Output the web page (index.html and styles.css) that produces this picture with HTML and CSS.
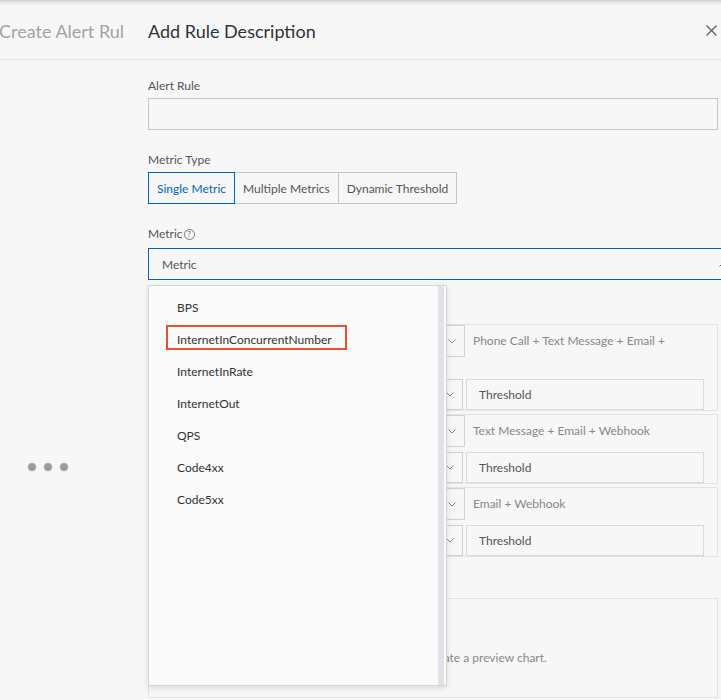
FILE: index.html
```html
<!DOCTYPE html>
<html lang="en">
<head>
<meta charset="utf-8">
<title>Create Alert Rule</title>
<link rel="stylesheet" href="styles.css">
</head>
<body>
<div class="app">
  <aside class="side">
    <div class="side-head"><span class="side-title">Create Alert Rule</span></div>
    <div class="side-body">
      <div class="loader"><i></i><i></i><i></i></div>
    </div>
  </aside>

  <section class="drawer">
    <header class="drawer-head">
      <h1 class="drawer-title">Add Rule Description</h1>
      <button class="close" type="button" aria-label="Close">
        <svg width="11" height="11" viewBox="0 0 11 11"><path d="M0.5 0.5L10.5 10.5M10.5 0.5L0.5 10.5" stroke="#555" stroke-width="1.1" fill="none"/></svg>
      </button>
    </header>

    <div class="drawer-body">
      <div class="field">
        <div class="field-label">Alert Rule</div>
        <div class="input"></div>
      </div>

      <div class="field">
        <div class="field-label">Metric Type</div>
        <div class="segmented">
          <button class="seg seg--active" type="button">Single Metric</button>
          <button class="seg" type="button">Multiple Metrics</button>
          <button class="seg" type="button">Dynamic Threshold</button>
        </div>
      </div>

      <div class="field field--metric">
        <div class="field-label field-label--help">Metric<span class="help">?</span></div>
        <div class="select select--open">
          <span>Metric</span>
          <svg width="8" height="5" viewBox="0 0 8 5"><path d="M0.5 4.5L4 1L7.5 4.5" fill="none" stroke="#666" stroke-width="1"/></svg>
        </div>
        <div class="dropdown">
          <ul class="dropdown-list">
            <li>BPS</li>
            <li class="is-marked">InternetInConcurrentNumber</li>
            <li>InternetInRate</li>
            <li>InternetOut</li>
            <li>QPS</li>
            <li>Code4xx</li>
            <li>Code5xx</li>
          </ul>
          <div class="dropdown-rail"></div>
        </div>
      </div>

      <div class="levels">
        <div class="level level--tall">
          <div class="level-top">
            <div class="mini-select"><svg width="8" height="5" viewBox="0 0 8 5"><path d="M0.5 0.5L4 4L7.5 0.5" fill="none" stroke="#888"/></svg></div>
            <div class="level-channels">Phone Call + Text Message + Email +</div>
          </div>
          <div class="level-bottom">
            <div class="mini-select"><svg width="8" height="5" viewBox="0 0 8 5"><path d="M0.5 0.5L4 4L7.5 0.5" fill="none" stroke="#888"/></svg></div>
            <div class="threshold">Threshold</div>
          </div>
        </div>
        <div class="level">
          <div class="level-top">
            <div class="mini-select"><svg width="8" height="5" viewBox="0 0 8 5"><path d="M0.5 0.5L4 4L7.5 0.5" fill="none" stroke="#888"/></svg></div>
            <div class="level-channels">Text Message + Email + Webhook</div>
          </div>
          <div class="level-bottom">
            <div class="mini-select"><svg width="8" height="5" viewBox="0 0 8 5"><path d="M0.5 0.5L4 4L7.5 0.5" fill="none" stroke="#888"/></svg></div>
            <div class="threshold">Threshold</div>
          </div>
        </div>
        <div class="level">
          <div class="level-top">
            <div class="mini-select"><svg width="8" height="5" viewBox="0 0 8 5"><path d="M0.5 0.5L4 4L7.5 0.5" fill="none" stroke="#888"/></svg></div>
            <div class="level-channels">Email + Webhook</div>
          </div>
          <div class="level-bottom">
            <div class="mini-select"><svg width="8" height="5" viewBox="0 0 8 5"><path d="M0.5 0.5L4 4L7.5 0.5" fill="none" stroke="#888"/></svg></div>
            <div class="threshold">Threshold</div>
          </div>
        </div>
      </div>

      <div class="preview">Select a metric to generate a preview chart.</div>
    </div>
  </section>
</div>
</body>
</html>
```
FILE: styles.css
```css
html, body {
  margin: 0;
  height: 700px;
  overflow: hidden;
}

body {
  background: #f7f7f7;
  font-family: Lato, "Liberation Sans", sans-serif;
  font-size: 12px;
  color: #333;
}

.app {
  display: flex;
  height: 700px;
  background: linear-gradient(#cbcbcb, #e6e6e6 2px, #f7f7f7 6px) no-repeat;
}

/* page behind the drawer */
.side {
  width: 124px;
  flex: none;
  overflow: hidden;
  display: flex;
  flex-direction: column;
}

.side-head {
  height: 60px;
  box-sizing: border-box;
  padding-top: 2px;
  border-bottom: 1px solid #e7e7e7;
  display: flex;
  align-items: center;
}

.side-title {
  white-space: nowrap;
  font-size: 18px;
  color: #a3a3a3;
  margin-left: -1px;
}

.side-body {
  padding: 403px 0 0 28px;
}

.loader {
  display: flex;
  gap: 8px;
}

.loader i {
  width: 8px;
  height: 8px;
  border-radius: 50%;
  background: #9c9c9c;
}

/* drawer */
.drawer {
  flex: 1;
  min-width: 0;
  display: flex;
  flex-direction: column;
}

.drawer-head {
  height: 60px;
  flex: none;
  box-sizing: border-box;
  border-bottom: 1px solid #e7e7e7;
  display: flex;
  align-items: center;
  justify-content: space-between;
  padding: 2px 4px 0 24px;
}

.drawer-title {
  margin: 0;
  font-size: 18px;
  font-weight: 400;
  color: #333;
}

.close {
  border: 0;
  padding: 0;
  background: none;
  display: flex;
}

.drawer-body {
  padding: 16px 3px 0 24px;
}

.field {
  margin-bottom: 20px;
}

.field-label {
  display: flex;
  align-items: center;
  line-height: 20px;
  margin-bottom: 2px;
  color: #555;
}

.field-label--help {
  margin-bottom: 4px;
}

.help {
  width: 9px;
  height: 9px;
  margin-left: 1px;
  border: 1px solid #7a7a7a;
  border-radius: 50%;
  font-size: 8px;
  line-height: 9px;
  text-align: center;
  color: #666;
}

.input {
  height: 32px;
  box-sizing: border-box;
  border: 1px solid #c3c6cb;
}

/* metric type switch */
.segmented {
  display: flex;
}

.seg {
  height: 32px;
  box-sizing: border-box;
  margin: 0 0 0 -1px;
  padding: 0 8px;
  border: 1px solid #c3c6cb;
  background: transparent;
  font: inherit;
  color: #555;
}

.seg:first-child {
  margin-left: 0;
}

.seg--active {
  position: relative;
  z-index: 1;
  border-color: #0064c8;
  color: #0064c8;
}

/* metric select with its open menu */
.field--metric {
  position: relative;
  margin-bottom: 44px;
}

.select {
  height: 32px;
  box-sizing: border-box;
  margin-right: -22px;
  padding: 0 12px 0 13px;
  border: 1px solid #0064c8;
  display: flex;
  align-items: center;
  justify-content: space-between;
  color: #555;
}

.dropdown {
  position: absolute;
  left: 0;
  top: calc(100% + 5px);
  z-index: 10;
  width: 299px;
  height: 401px;
  box-sizing: border-box;
  border: 1px solid #d6d6d6;
  background: #fafafa;
  box-shadow: 0 2px 6px rgba(0, 0, 0, 0.12);
  display: flex;
}

.dropdown-list {
  flex: 1;
  list-style: none;
  margin: 0;
  padding: 6px 0 0;
}

.dropdown-list li {
  position: relative;
  height: 32px;
  line-height: 32px;
  padding-left: 28px;
  color: #333;
}

.dropdown-list li.is-marked::after {
  content: "";
  position: absolute;
  left: 17px;
  top: 1px;
  width: 181px;
  height: 25px;
  box-sizing: border-box;
  border: 2px solid #e8502f;
}

.dropdown-rail {
  width: 6px;
  margin-right: 2px;
  background: #dfe3e8;
}

/* alert levels */
.levels {
  display: flex;
  flex-direction: column;
  gap: 3px;
  margin-bottom: 41px;
}

.level {
  border: 1px solid #e3e3e3;
  display: flex;
  flex-direction: column;
  gap: 5px;
}

.level-top {
  display: grid;
  grid-template-columns: 1fr 252px;
  min-height: 32px;
}

.level--tall .level-top {
  min-height: 49px;
}

.mini-select {
  height: 32px;
  box-sizing: border-box;
  padding: 0 8px;
  border: 1px solid #d0d2d6;
  display: flex;
  align-items: center;
  justify-content: flex-end;
}

.level-channels {
  padding: 7px 0 0 8px;
  line-height: 18px;
  color: #888;
  white-space: nowrap;
  overflow: hidden;
}

.level-bottom {
  display: grid;
  grid-template-columns: 1fr 238px;
  column-gap: 3px;
  padding-right: 13px;
}

.level-bottom .mini-select {
  height: 31px;
}

.threshold {
  height: 31px;
  box-sizing: border-box;
  padding-left: 12px;
  border: 1px solid #dadada;
  line-height: 29px;
  color: #555;
}

/* chart preview */
.preview {
  height: 100px;
  box-sizing: border-box;
  padding-top: 50px;
  border: 1px solid #e3e3e3;
  text-align: center;
  line-height: 18px;
  color: #888;
}
```
